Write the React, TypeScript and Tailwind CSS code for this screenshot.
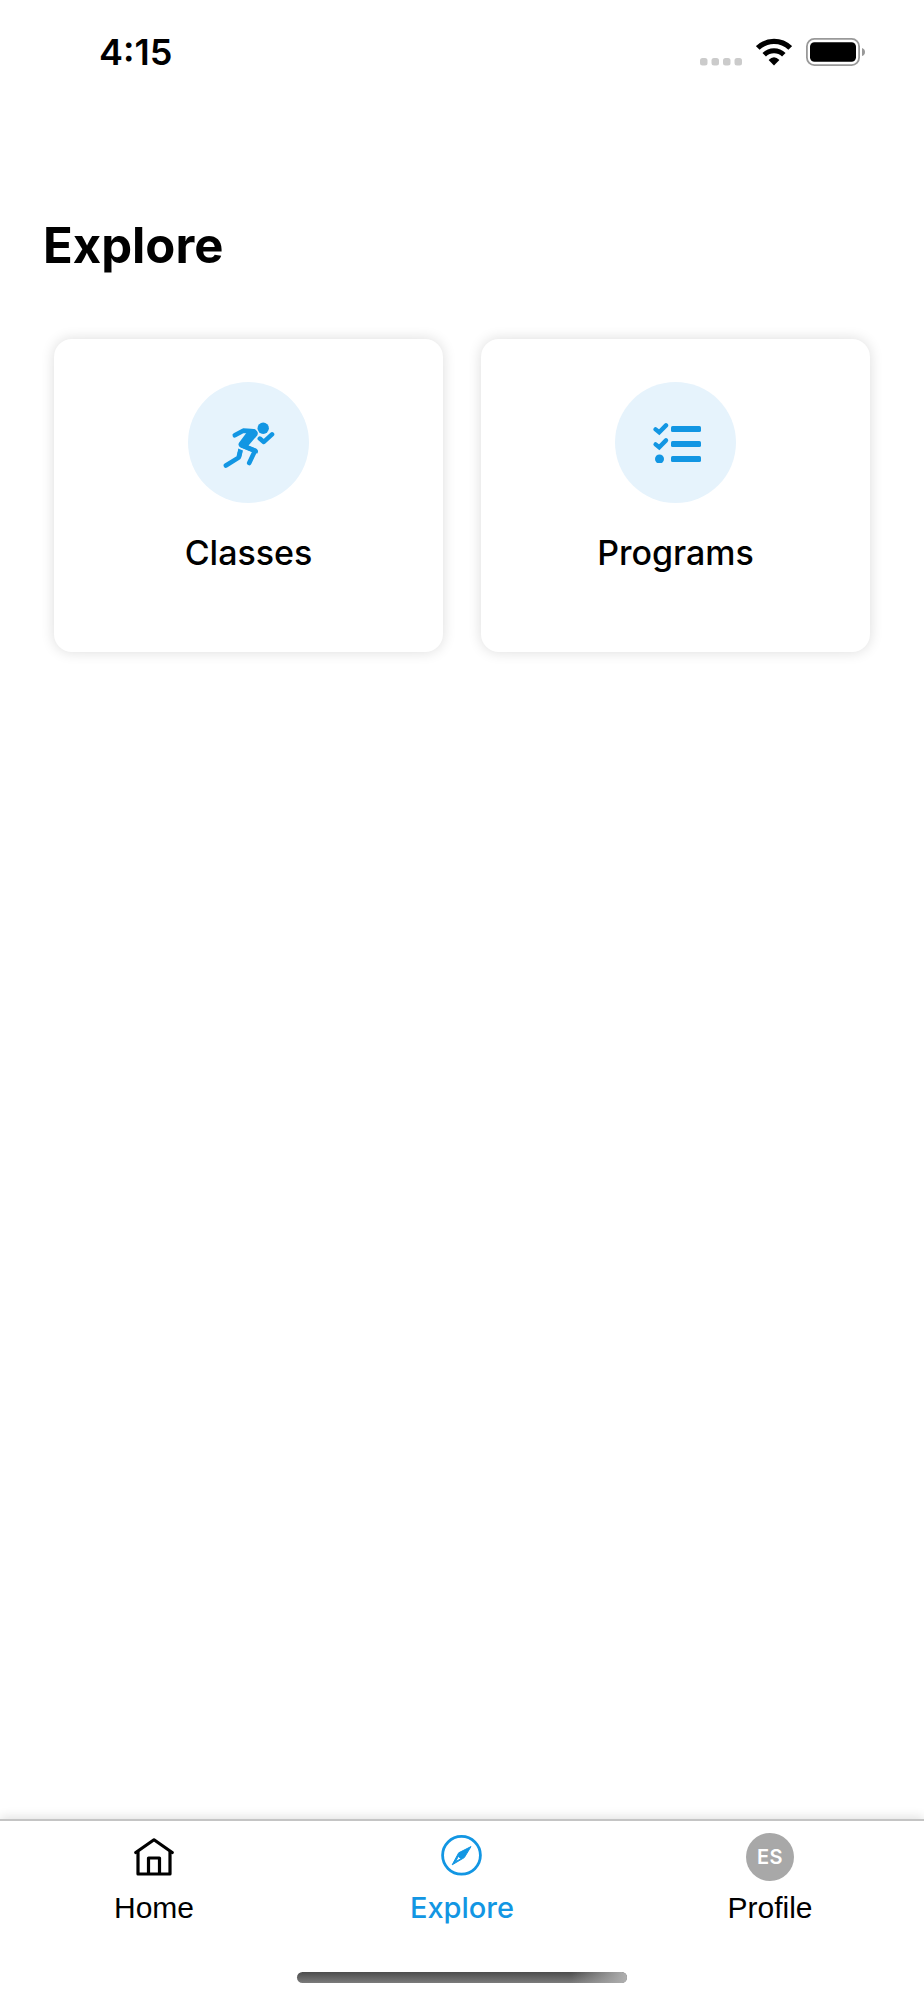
import type { ReactNode } from 'react';

export default function App() {
  return (
    <div className="min-h-screen flex flex-col bg-white text-black font-['Inter','Liberation_Sans',sans-serif]">
      <StatusBar />

      <main className="flex-1 px-[43px] pt-28">
        <h1 className="text-[49px] leading-[60px] font-bold">Explore</h1>
        <div className="grid grid-cols-2 gap-[38px] px-[11px] mt-[63px]">
          <ExploreCard label="Classes" icon={<RunnerIcon />} />
          <ExploreCard label="Programs" icon={<ChecklistIcon />} />
        </div>
      </main>

      <TabBar />
    </div>
  );
}

function StatusBar() {
  return (
    <header className="flex items-center justify-between h-26 pl-[99px] pr-[58px]">
      <span className="text-[36px] leading-[44px] font-semibold">4:15</span>
      <div className="flex items-center gap-[14px]">
        <svg width="42" height="28" viewBox="0 0 42 28" fill="#cbcbcb" aria-hidden="true">
          <rect x="0" y="20" width="7.5" height="7.5" rx="2.5" />
          <rect x="11.5" y="20" width="7.5" height="7.5" rx="2.5" />
          <rect x="23" y="20" width="7.5" height="7.5" rx="2.5" />
          <rect x="34.5" y="20" width="7.5" height="7.5" rx="2.5" />
        </svg>
        <svg width="36" height="28" viewBox="0 0 36 28" aria-hidden="true">
          <path d="M18 27.4 L12.6 22 Q18 16.6 23.4 22 Z" />
          <path d="M8.2 16.8 A14 14 0 0 1 27.8 16.8" fill="none" stroke="#000" strokeWidth="5" />
          <path d="M1.8 10 A23.2 23.2 0 0 1 34.2 10" fill="none" stroke="#000" strokeWidth="5.2" />
        </svg>
        <svg width="60" height="28" viewBox="0 0 60 28" aria-hidden="true">
          <rect x="0.9" y="0.9" width="52.2" height="26.2" rx="7.5" fill="none" stroke="#999" strokeWidth="1.8" />
          <rect x="4" y="4.2" width="46" height="19.6" rx="4.5" />
          <path d="M56 10 Q59 11 59 14 Q59 17 56 18 Z" fill="#999" />
        </svg>
      </div>
    </header>
  );
}

function ExploreCard({ label, icon }: { label: string; icon: ReactNode }) {
  return (
    <button
      type="button"
      className="flex flex-col items-center rounded-[18px] bg-white pt-[43px] pb-[78px] shadow-[0_0_14px_rgba(0,0,0,0.14)]"
    >
      <span className="flex items-center justify-center w-[121px] h-[121px] rounded-full bg-[#e6f3fc]">
        {icon}
      </span>
      <span className="mt-[29px] text-[34px] leading-[42px] font-medium">{label}</span>
    </button>
  );
}

function TabBar() {
  return (
    <nav className="border-t-2 border-[#c4c4c4] bg-white shadow-[0_-2px_10px_rgba(0,0,0,0.12)]">
      <div className="grid grid-cols-3">
        <Tab label="Home" icon={<HomeIcon />} />
        <Tab label="Explore" icon={<CompassIcon />} active />
        <Tab
          label="Profile"
          icon={
            <span className="flex items-center justify-center w-12 h-12 rounded-full bg-[#a8a8a8] text-white text-[20px] font-semibold tracking-wide">
              ES
            </span>
          }
        />
      </div>
      <div className="mx-auto mt-[44px] mb-[17px] w-[330px] h-[11px] rounded-full bg-linear-to-b from-[#4c4c4c] to-[#7c7c7c] overflow-hidden">
        <div className="ml-auto w-14 h-full bg-linear-to-r from-transparent to-[#b0b0b0]" />
      </div>
    </nav>
  );
}

function Tab({ label, icon, active = false }: { label: string; icon: ReactNode; active?: boolean }) {
  return (
    <a
      href="#"
      aria-current={active ? 'page' : undefined}
      className={`flex flex-col items-center pt-3 ${active ? 'text-[#1296e3]' : 'text-black'}`}
    >
      <span className="flex items-center justify-center h-12">{icon}</span>
      <span
        className={`mt-[7px] leading-[40px] ${
          active ? 'text-[29px] font-medium' : "text-[30px] font-['Liberation_Sans',sans-serif]"
        }`}
      >
        {label}
      </span>
    </a>
  );
}

function RunnerIcon() {
  return (
    <svg
      width="52"
      height="50"
      viewBox="0 -1 52 50"
      fill="none"
      stroke="#1296e3"
      strokeWidth="4.6"
      strokeLinecap="round"
      strokeLinejoin="round"
      aria-hidden="true"
    >
      <circle cx="40.2" cy="9.2" r="5.7" fill="#1296e3" stroke="none" />
      <path d="M11.8 16.3 L20.2 11.7 L30.5 12.2" />
      <path d="M19.5 9.4 L31 9.9 Q36 12 34.4 16.2 L25.5 26.5 L33.5 29.8 Q36 31.5 34.4 34.5 L30.5 33.5 L17 28 Q14.5 26.3 16 23.8 L24 13 Z" fill="#1296e3" stroke="none" />
      <path d="M31.8 14 L18.5 26.3 L32 31.8 L26.2 44" />
      <path d="M15.2 29.5 L20 31.5 L18 39 L14 39 Z" fill="#1296e3" stroke="none" />
      <path d="M16.8 33.5 L15.6 38.6 L2.9 46.5" />
      <path d="M36.8 19.6 L40.8 22.9 L49 15.4" />
    </svg>
  );
}

function ChecklistIcon() {
  return (
    <svg width="50" height="40" viewBox="0 0 50 40" fill="none" stroke="#1296e3" aria-hidden="true">
      <g strokeWidth="4.4" strokeLinecap="round" strokeLinejoin="miter">
        <path d="M4.6 6.4 L8.2 9.3 L15 2.4" />
        <path d="M4.6 21.4 L8.2 24.3 L15 17.4" />
      </g>
      <g fill="#1296e3" stroke="none">
        <circle cx="8.5" cy="36" r="4.5" />
        <rect x="20" y="3" width="30" height="6" rx="1.6" />
        <rect x="20" y="18" width="30" height="6" rx="1.6" />
        <rect x="20" y="33" width="30" height="6" rx="1.6" />
      </g>
    </svg>
  );
}

function HomeIcon() {
  return (
    <svg
      width="40"
      height="40"
      viewBox="0 0 40 40"
      fill="none"
      stroke="#000"
      strokeWidth="3.2"
      strokeLinecap="round"
      strokeLinejoin="round"
      aria-hidden="true"
    >
      <path d="M1.8 15.5 L20 2.8 L38.2 15.5" />
      <path d="M4 15 V37 H36 V15" />
      <path d="M14.5 36.5 V21 H25.5 V36.5" />
    </svg>
  );
}

function CompassIcon() {
  return (
    <svg width="42" height="44" viewBox="0 0 42 44" aria-hidden="true">
      <circle cx="20.5" cy="20.3" r="18.9" fill="none" stroke="#1296e3" strokeWidth="2.8" />
      <path
        d="M30 11.6 L17.7 17.8 L11.2 29.8 L23.3 22.6 Z M14.6 26.7 L17.6 20.6 A2.6 2.6 0 0 0 20.8 23.2 Z"
        fill="#1296e3"
        fillRule="evenodd"
        stroke="#1296e3"
        strokeWidth="1"
        strokeLinejoin="round"
      />
    </svg>
  );
}
